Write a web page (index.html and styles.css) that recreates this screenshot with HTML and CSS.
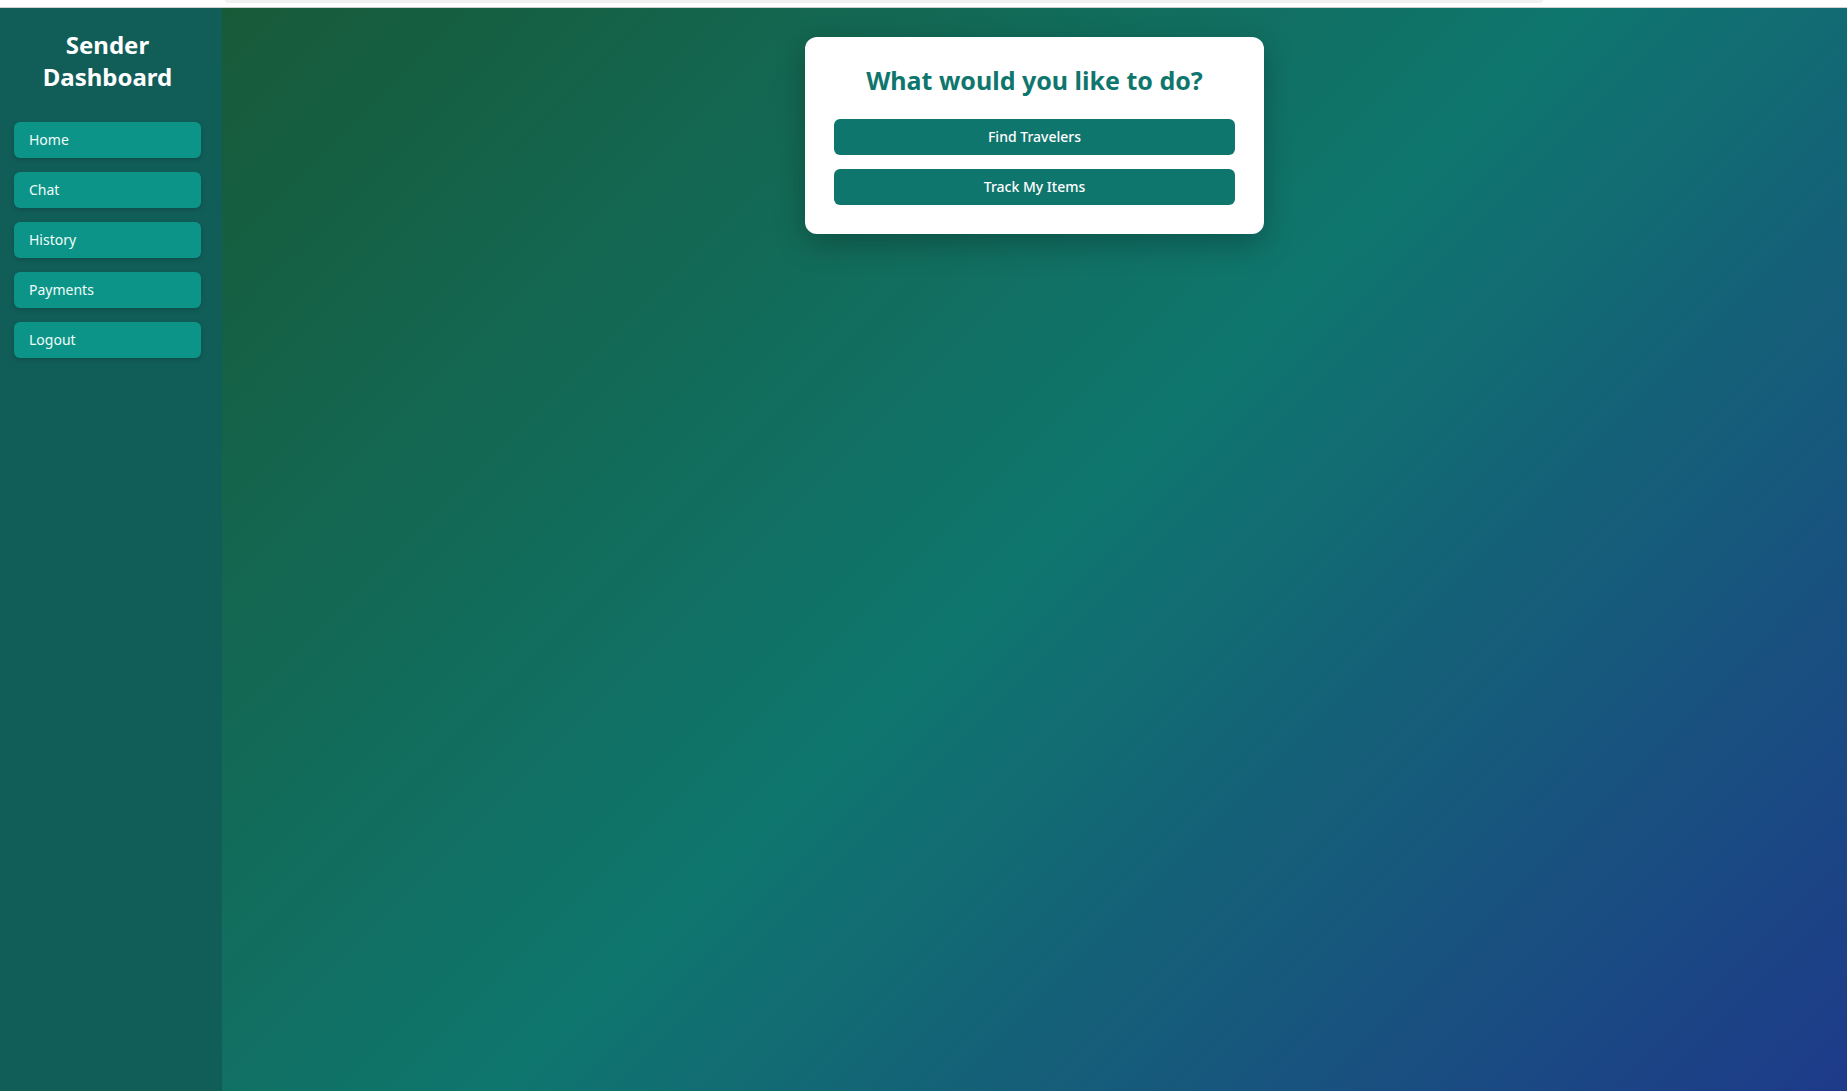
FILE: index.html
```html
<!DOCTYPE html>
<html lang="en">
<head>
<meta charset="utf-8">
<title>Sender Dashboard</title>
<link rel="stylesheet" href="styles.css">
</head>
<body>
<div class="topstrip"><div class="topbar"></div></div>
<div class="layout">
  <aside class="sidebar">
    <h2 class="brand">Sender<br>Dashboard</h2>
    <nav class="nav">
      <a class="nav-btn" href="#">Home</a>
      <a class="nav-btn" href="#">Chat</a>
      <a class="nav-btn" href="#">History</a>
      <a class="nav-btn" href="#">Payments</a>
      <a class="nav-btn" href="#">Logout</a>
    </nav>
  </aside>
  <main class="main">
    <section class="card">
      <h1 class="card-title">What would you like to do?</h1>
      <button class="action">Find Travelers</button>
      <button class="action">Track My Items</button>
    </section>
  </main>
</div>
</body>
</html>
```

FILE: styles.css
```css
* { box-sizing: border-box; }
html, body { margin: 0; padding: 0; height: 100%; }
body {
  font-family: "Noto Sans", "Open Sans", sans-serif;
  background: #ffffff;
  overflow: hidden;
}
.topstrip {
  height: 8px;
  background: #ffffff;
  border-bottom: 1px solid #cfcfcf;
  padding-left: 225px;
}
.topbar {
  width: 1318px;
  height: 3px;
  background: #f1f1f1;
  border-radius: 0 0 4px 4px;
}
.layout {
  display: flex;
  height: 1083px;
}
.sidebar {
  width: 222px;
  flex: 0 0 222px;
  background: #115e59;
  padding: 21px 21px 0 14px;
}
.brand {
  margin: 0 0 29px 0;
  color: #ffffff;
  font-size: 24px;
  line-height: 32px;
  font-weight: 700;
  text-align: center;
}
.nav {
  display: flex;
  flex-direction: column;
  gap: 14px;
}
.nav-btn {
  display: block;
  height: 36px;
  line-height: 35px;
  padding-left: 15px;
  background: #0d9488;
  color: #f0fdfa;
  border-radius: 6px;
  text-decoration: none;
  font-size: 14px;
  box-shadow: 0 2px 5px rgba(0, 0, 0, 0.18);
}
.main {
  flex: 1;
  background: linear-gradient(135deg, #175a38 0%, #0f766e 50%, #1e3a8a 100%);
  display: flex;
  justify-content: center;
  align-items: flex-start;
  padding-top: 29px;
}
.card {
  width: 459px;
  background: #ffffff;
  border-radius: 12px;
  padding: 26px 29px 29px;
  box-shadow: 0 10px 30px rgba(0, 0, 0, 0.25);
  display: flex;
  flex-direction: column;
  gap: 14px;
}
.card-title {
  margin: 0 0 8px 0;
  color: #0f766e;
  font-size: 25px;
  line-height: 34px;
  font-weight: 700;
  text-align: center;
}
.action {
  height: 36px;
  border: 0;
  border-radius: 6px;
  background: #0f766e;
  color: #ffffff;
  font-family: inherit;
  font-size: 14px;
  font-weight: 500;
  padding-bottom: 3px;
  cursor: pointer;
}
```
